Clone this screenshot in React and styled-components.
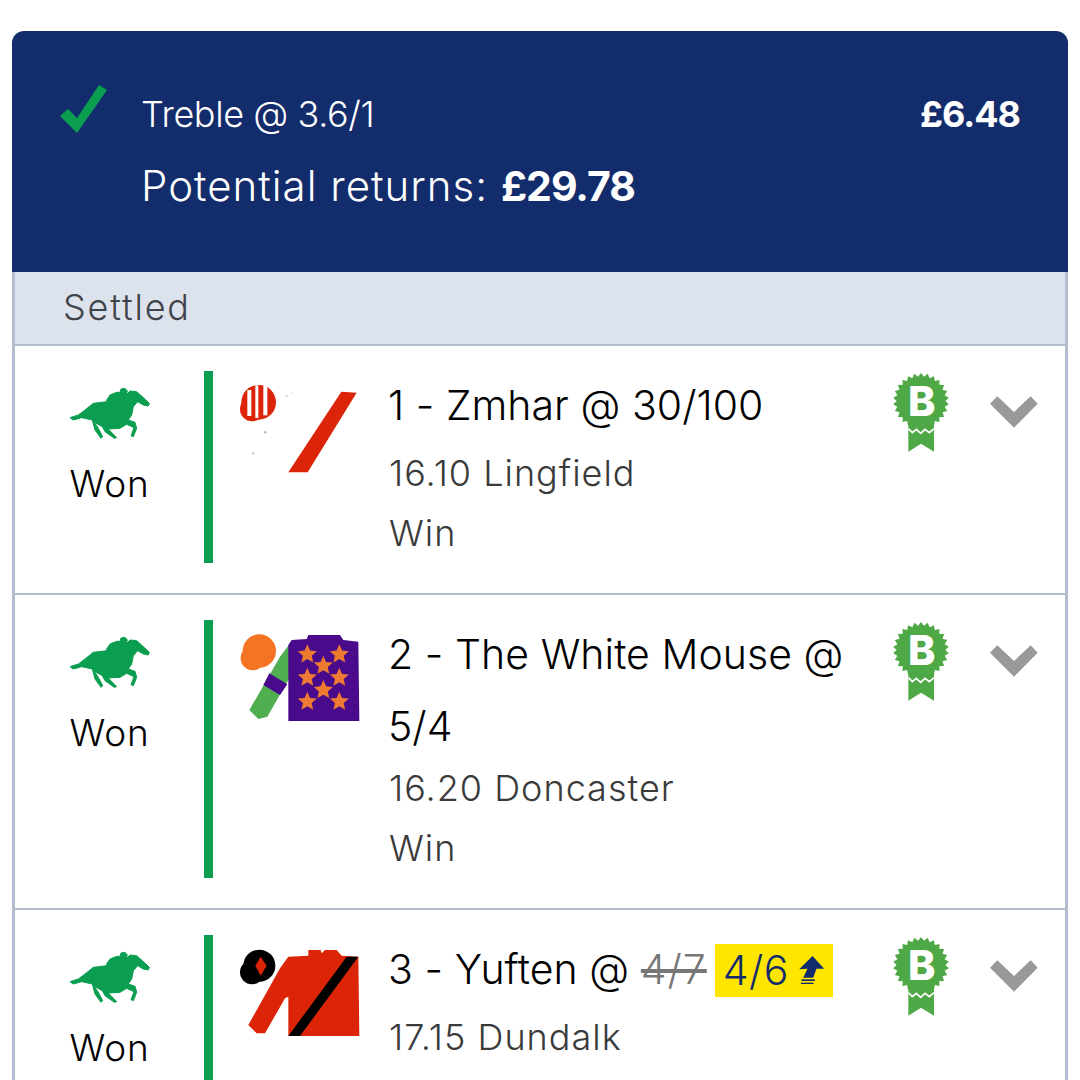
import React from "react";
import styled, { createGlobalStyle } from "styled-components";

const Global = createGlobalStyle`
  html, body { margin: 0; padding: 0; background: #fff; }
  body { font-family: "Inter", "Liberation Sans", sans-serif; font-weight: 300; -webkit-font-smoothing: antialiased; }
  #root { height: 1080px; overflow: hidden; }
`;

const Page = styled.div`
  padding: 31px 12px 0;
  box-sizing: border-box;
  width: 1080px;
`;
const Card = styled.div`
  border-radius: 12px 12px 0 0;
  overflow: hidden;
`;
const Header = styled.header`
  background: #132c6b;
  color: #fff;
  display: flex;
  align-items: flex-start;
  padding: 54px 48px 49px 48px;
`;
const CheckIcon = styled.svg`
  width: 48px;
  height: 48px;
  flex: none;
  margin-right: 33px;
  display: block;
`;
const HeaderBody = styled.div`
  flex: 1;
`;
const BetLine = styled.div`
  display: flex;
  justify-content: space-between;
  align-items: center;
  height: 58px;
  margin-bottom: 8px;
`;
const BetName = styled.span`
  font-size: 36px;
  letter-spacing: -0.4px;
`;
const Stake = styled.span`
  font-size: 36px;
  font-weight: 700;
  letter-spacing: -1px;
`;
const Returns = styled.div`
  font-size: 42px;
  line-height: 70px;
  letter-spacing: 1px;
  margin-bottom: 2px;
  b { font-weight: 700; font-size: 41px; letter-spacing: -1px; }
`;
const Body = styled.div`
  border-left: 3px solid #b4bdd0;
  border-right: 3px solid #b4bdd0;
`;
const Status = styled.div`
  background: #dde3ed;
  color: #3f444a;
  font-size: 36px;
  letter-spacing: 1.8px;
  height: 72px;
  line-height: 70px;
  padding-left: 48px;
  border-bottom: 2px solid #b4bdd0;
`;
const Row = styled.div`
  display: flex;
  align-items: stretch;
  padding: 25px 27px 30px 0;
  border-bottom: 2px solid #b4bdd0;
  background: #fff;
`;
const Result = styled.div`
  width: 189px;
  flex: none;
  display: flex;
  flex-direction: column;
  align-items: center;
  padding-top: 14px;
`;
const Horse = styled.svg`
  width: 90px;
  height: 60px;
  display: block;
`;
const ResultLabel = styled.div`
  font-size: 37px;
  line-height: 44px;
  letter-spacing: 0.8px;
  margin-top: 17px;
  color: #000;
`;
const Bar = styled.div`
  width: 9px;
  flex: none;
  background: #0b9e50;
`;
const Silk = styled.svg`
  width: 120px;
  height: 110px;
  flex: none;
  margin: 0 30px 0 27px;
  display: block;
  filter: blur(0.5px);
`;
const Info = styled.div`
  flex: 1;
  padding-bottom: 5px;
  min-width: 0;
`;
const Title = styled.div`
  font-size: 41px;
  line-height: 72px;
  letter-spacing: 0.05px;
  color: #000;
  margin-left: -2px;
  margin-top: -2px;
  margin-bottom: ${(p) => (p.$wrapped ? "1px" : "7px")};
`;
const Meta = styled.div`
  font-size: 36px;
  line-height: 50px;
  letter-spacing: 1px;
  color: #3a3a3a;
  margin-left: -1px;
  & + & { margin-top: 10px; }
`;
const Struck = styled.span`
  color: #777;
  letter-spacing: 1px;
  text-decoration: line-through;
  text-decoration-thickness: 4px;
`;
const Boost = styled.span`
  display: inline-flex;
  align-items: center;
  background: #ffe600;
  color: #132c6b;
  height: 53px;
  padding: 0 8px;
  margin-left: 8px;
  letter-spacing: 0.5px;
  vertical-align: -1px;
`;
const BoostArrow = styled.svg`
  width: 27px;
  height: 30px;
  margin-left: 9px;
  display: block;
`;
const Badge = styled.svg`
  width: 56px;
  height: 80px;
  flex: none;
  margin-top: 2px;
  display: block;
`;
const Chevron = styled.svg`
  width: 48px;
  height: 32px;
  flex: none;
  margin: 25px 0 0 41px;
  display: block;
`;

const burst = (() => {
  const pts = [];
  const n = 26;
  for (let i = 0; i < n * 2; i++) {
    const r = i % 2 ? 73 : 84;
    const a = (Math.PI * i) / n;
    pts.push(`${(123 + r * Math.sin(a)).toFixed(1)},${(107 - r * Math.cos(a)).toFixed(1)}`);
  }
  return pts.join(" ");
})();

const star = (cx, cy, R = 30, r = 14) => {
  const pts = [];
  for (let i = 0; i < 10; i++) {
    const rad = i % 2 ? r : R;
    const a = (Math.PI * i) / 5;
    pts.push(`${(cx + rad * Math.sin(a)).toFixed(1)},${(cy - rad * Math.cos(a)).toFixed(1)}`);
  }
  return pts.join(" ");
};

const HorseIcon = () => (
  <Horse viewBox="0 0 270 180">
    <path
      fill="#0b9e50"
      stroke="#0b9e50"
      strokeWidth="3"
      strokeLinejoin="round"
      d="M15 98 L40 90 L60 75 L85 55 L125 50 L125 45 L135 30 L155 22 L165 22 L168 12 L180 10 L187 18 L183 30 L195 18 L215 20 L232 35 L253 55 L250 63 L235 60 L218 50 L205 65 L200 90 L190 105 L210 112 L215 130 L205 155 L198 152 L207 128 L185 118 L165 130 L130 132 L155 158 L148 160 L120 140 L112 125 L88 112 L100 130 L113 155 L108 160 L90 135 L82 105 L50 98 L25 105 Z"
    />
  </Horse>
);
const Bad = () => (
  <Badge viewBox="39 23 168 240">
    <path fill="#4fa846" d="M85 175 L162 175 L162 259 L123 235 L85 259 Z" />
    <polygon fill="#4fa846" points={burst} />
    <path fill="none" stroke="#fff" strokeWidth="5" d="M85 190 L97 202 L109 192 L122 204 L135 192 L148 202 L162 190" />
    <text x="125" y="152" textAnchor="middle" fill="#fff" fontFamily="Inter, sans-serif" fontWeight="800" fontSize="124">B</text>
  </Badge>
);
const Chev = () => (
  <Chevron viewBox="330 92 144 96">
    <polygon fill="#999" points="330,115 352,93 402,140 452,93 473,115 402,187" />
  </Chevron>
);

const Silk1 = () => (
  <Silk viewBox="600 3 360 330">
    <polygon fill="#dc2408" points="904,65 950,68 803,307 745,307" />
    <circle cx="656" cy="97" r="52" fill="#dc2408" />
    <circle cx="636" cy="118" r="36" fill="#dc2408" />
    <rect x="622" y="60" width="12" height="78" fill="#fff" />
    <rect x="646" y="46" width="9" height="98" fill="#fff" />
    <rect x="670" y="46" width="12" height="90" fill="#fff" />
    <circle cx="676" cy="187" r="4" fill="#bbb" />
    <circle cx="640" cy="250" r="4" fill="#ccc" />
    <circle cx="740" cy="78" r="4" fill="#ddd" />
    <circle cx="757" cy="70" r="3" fill="#e5e5e5" />
  </Silk>
);
const Silk2 = () => (
  <Silk viewBox="30 -15 360 330">
    <polygon fill="#4fae50" points="178,58 178,160 112,275 85,282 58,255 110,165 150,95" />
    <polygon fill="#4a0a8c" points="118,145 172,178 150,210 100,180" />
    <circle cx="88" cy="78" r="50" fill="#f57423" />
    <circle cx="68" cy="100" r="36" fill="#f57423" />
    <polygon fill="#4a0a8c" points="235,30 330,30 340,45 385,50 388,288 175,288 175,60 185,45 230,42" />
    {[[232, 88], [328, 88], [280, 122], [232, 158], [328, 158], [280, 195], [232, 230], [328, 230]].map(([x, y]) => (
      <polygon key={`${x}-${y}`} fill="#ed7a30" points={star(x, y)} />
    ))}
  </Silk>
);
const Silk3 = () => (
  <Silk viewBox="30 0 360 330">
    <polygon fill="#dc2408" points="235,45 272,45 275,55 285,45 320,45 335,62 385,65 388,303 175,303 175,185 165,190 105,295 80,295 55,270 150,100 175,65 235,62" />
    <polygon fill="#000" points="350,65 385,65 210,303 175,303" />
    <circle cx="88" cy="92" r="48" fill="#000" />
    <circle cx="66" cy="112" r="36" fill="#000" />
    <polygon fill="#dc2408" points="92,65 110,92 92,122 76,92" />
  </Silk>
);

const Leg = ({ silk, children, wrapped, meta }) => (
  <Row>
    <Result>
      <HorseIcon />
      <ResultLabel>Won</ResultLabel>
    </Result>
    <Bar />
    {silk}
    <Info>
      <Title $wrapped={wrapped}>{children}</Title>
      {meta.map((m) => (
        <Meta key={m}>{m}</Meta>
      ))}
    </Info>
    <Bad />
    <Chev />
  </Row>
);

export default function App() {
  return (
    <Page>
      <Global />
      <Card>
        <Header>
          <CheckIcon viewBox="60 64 48 48" style={{ overflow: "visible" }}>
            <polygon fill="#0b9e50" points="60,95 68,88 77,97 99,64 107,69 77,112" />
          </CheckIcon>
          <HeaderBody>
            <BetLine>
              <BetName>Treble @ 3.6/1</BetName>
              <Stake>£6.48</Stake>
            </BetLine>
            <Returns>
              Potential returns: <b>£29.78</b>
            </Returns>
          </HeaderBody>
        </Header>
        <Body>
          <Status>Settled</Status>
          <Leg silk={<Silk1 />} meta={["16.10 Lingfield", "Win"]}>1 - Zmhar @ 30/100</Leg>
          <Leg silk={<Silk2 />} wrapped meta={["16.20 Doncaster", "Win"]}>2 - The White Mouse @ 5/4</Leg>
          <Leg silk={<Silk3 />} meta={["17.15 Dundalk", "Win"]}>
            3 - Yuften @ <Struck>4/7</Struck>
            <Boost>
              4/6
              <BoostArrow viewBox="500 62 80 90">
                <path fill="#132c6b" d="M543 65 L578 103 L555 103 L545 130 L515 130 L528 103 L503 105 Z" />
                <rect x="510" y="135" width="40" height="5" fill="#132c6b" />
                <rect x="508" y="145" width="38" height="4" fill="#132c6b" />
              </BoostArrow>
            </Boost>
          </Leg>
        </Body>
      </Card>
    </Page>
  );
}
